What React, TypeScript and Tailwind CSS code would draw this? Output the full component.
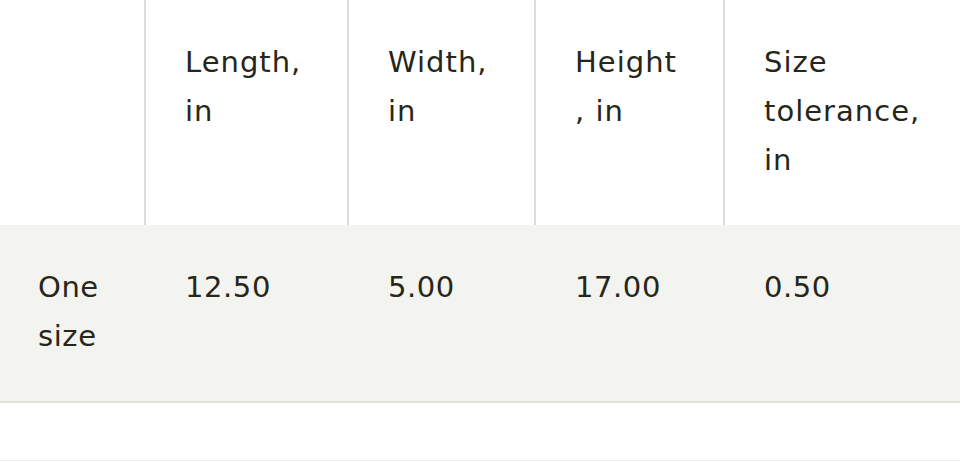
const headers = [
  ['Length,', 'in'],
  ['Width,', 'in'],
  ['Height', ', in'],
  ['Size', 'tolerance,', 'in'],
]

const values = ['12.50', '5.00', '17.00', '0.50']

const widths = ['w-[145px]', 'w-[203px]', 'w-[187px]', 'w-[189px]', '']

export default function App() {
  return (
    <div className="h-[463px] w-[960px] overflow-hidden bg-white font-['DejaVu_Sans','Liberation_Sans',sans-serif] text-[29px] leading-[49px] tracking-[0.02em] text-[#26261a]">
      <table className="w-[960px] table-fixed border-collapse">
        <thead>
          <tr className="h-[225px] align-top">
            <th className={`${widths[0]} p-0`} />
            {headers.map((lines, i) => (
              <th
                key={i}
                className={`${widths[i + 1]} border-l-2 border-[#dddddb] pl-[39px] pt-[38px] text-left font-normal tracking-[0.035em]`}
              >
                {lines.map((l) => (
                  <span key={l} className="block">
                    {l}
                  </span>
                ))}
              </th>
            ))}
          </tr>
        </thead>
        <tbody>
          <tr className="h-[177px] border-b-2 border-[#e0e0dc] bg-[#f3f3ef] align-top">
            <td className="pl-[38px] pt-[38px]">
              <span className="block">One</span>
              <span className="block">size</span>
            </td>
            {values.map((v) => (
              <td key={v} className="pl-[40px] pt-[38px]">
                {v}
              </td>
            ))}
          </tr>
        </tbody>
      </table>
      <div className="mt-[57px] h-px bg-[#ececea]" />
    </div>
  )
}
